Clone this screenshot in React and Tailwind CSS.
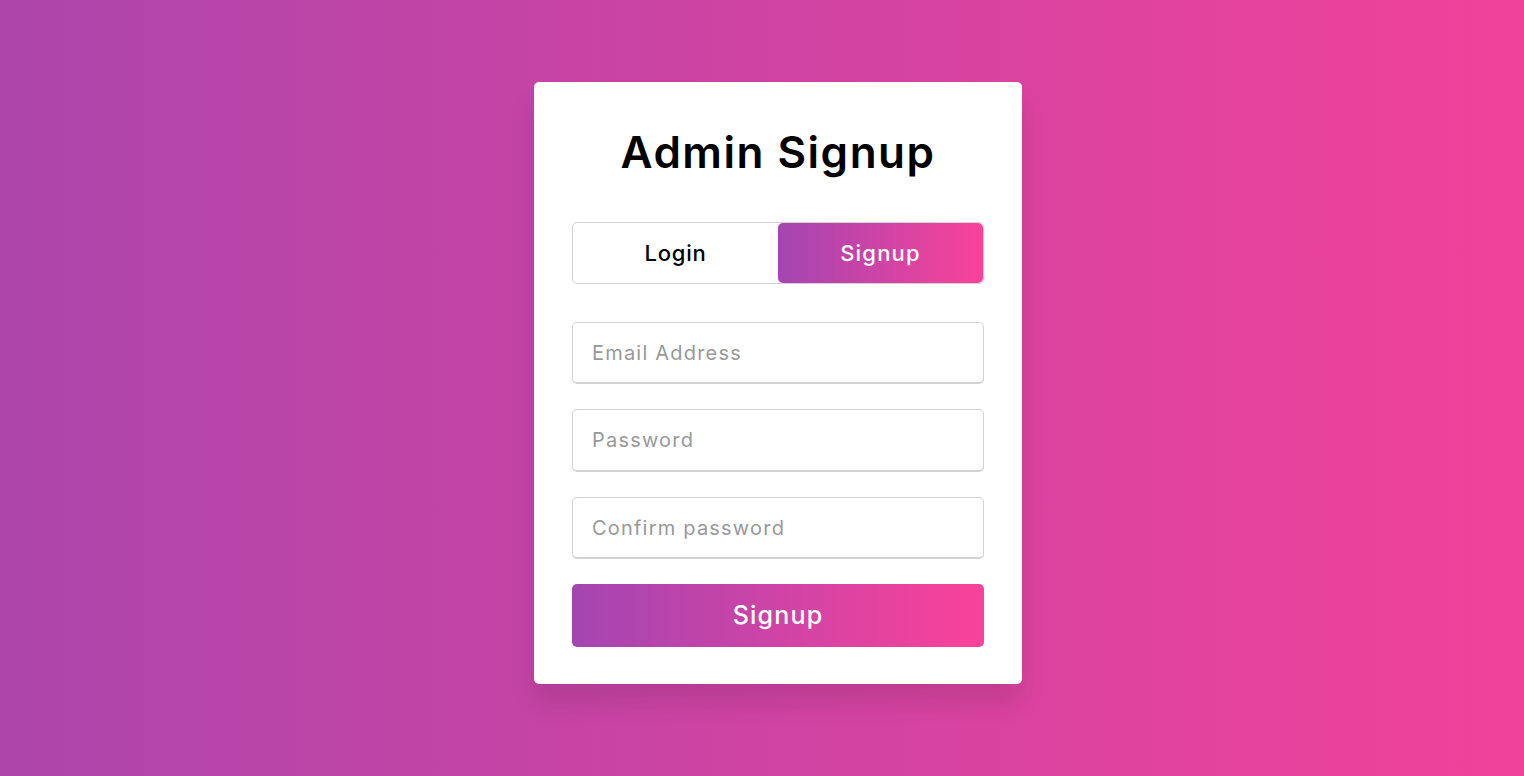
import { useState } from "react";

export default function App() {
  const [tab, setTab] = useState("signup");

  const inputCls =
    "mt-[25px] h-[62.5px] w-full rounded-[5px] border border-b-2 border-[#d3d3d3] pl-[19px] text-[20px] tracking-[1.2px] outline-none placeholder:text-[#999]";

  return (
    <div className="min-h-screen w-full flex items-center justify-center pb-[10px] pl-[32px] bg-[linear-gradient(to_right,#ad45ab,#f1429a)] font-['Inter','Noto_Sans',sans-serif]">
      <div className="w-[488px] bg-white rounded-[5px] px-[38px] py-[37.5px] shadow-[0_19px_25px_rgba(0,0,0,0.1)]">
        <h1 className="h-[65px] flex items-center justify-center text-[44px] font-semibold text-black tracking-[1.5px]">
          Admin Signup
        </h1>

        {/* slide controls */}
        <div className="mt-[37.5px] h-[62.5px] flex border border-[#d3d3d3] rounded-[5px] overflow-hidden">
          <button
            type="button"
            onClick={() => setTab("login")}
            className={`flex-1 text-[22px] font-medium tracking-[0.8px] rounded-[5px] ${
              tab === "login"
                ? "bg-[linear-gradient(to_right,#a445b2,#fa4299)] text-white"
                : "text-black"
            }`}
          >
            Login
          </button>
          <button
            type="button"
            onClick={() => setTab("signup")}
            className={`flex-1 text-[22px] font-medium tracking-[1.2px] rounded-[5px] ${
              tab === "signup"
                ? "bg-[linear-gradient(to_right,#a445b2,#fa4299)] text-white"
                : "text-black"
            }`}
          >
            Signup
          </button>
        </div>

        <form className="mt-[12.5px] flex flex-col" onSubmit={(e) => e.preventDefault()}>
          <input type="email" placeholder="Email Address" className={inputCls} />
          <input type="password" placeholder="Password" className={inputCls} />
          <input type="password" placeholder="Confirm password" className={inputCls} />
          <button
            type="submit"
            className="mt-[25px] h-[62.5px] w-full rounded-[5px] bg-[linear-gradient(to_right,#a445b2,#fa4299)] text-white text-[25px] font-medium tracking-[1.2px]"
          >
            Signup
          </button>
        </form>
      </div>
    </div>
  );
}
